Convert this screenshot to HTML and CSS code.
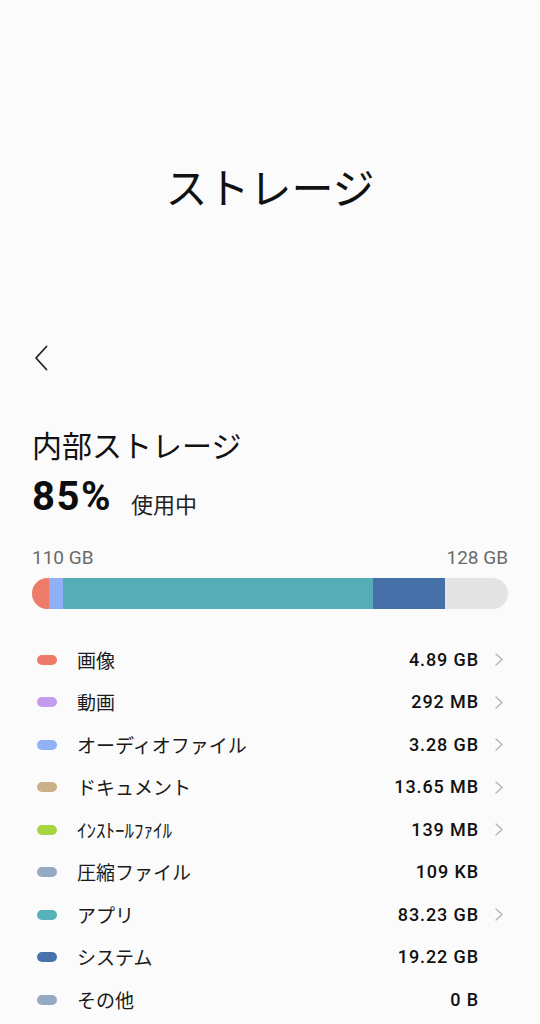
FILE: index.html
```html
<!DOCTYPE html>
<html lang="ja">
<head>
<meta charset="utf-8">
<title>ストレージ</title>
<link rel="stylesheet" href="styles.css">
</head>
<body>
<div class="page">
  <h1 class="title">ストレージ</h1>
  <div class="nav">
    <svg class="back" width="14" height="26" viewBox="0 0 14 26"><path d="M12.5 1.5 L2 13 L12.5 24.5" fill="none" stroke="#222" stroke-width="1.8" stroke-linecap="round" stroke-linejoin="round"/></svg>
  </div>
  <h2 class="heading">内部ストレージ</h2>
  <div class="usage"><span class="pct">85%</span><span class="inuse">使用中</span></div>
  <div class="scale"><span>110 GB</span><span>128 GB</span></div>
  <div class="bar">
    <div class="seg red" style="width:3.6%"></div>
    <div class="seg lblue" style="width:2.9%"></div>
    <div class="seg teal" style="width:65.1%"></div>
    <div class="seg dblue" style="width:15.1%"></div>
  </div>
  <ul class="list">
    <li class="row"><span class="dot c-img"></span><span class="label">画像</span><span class="value">4.89 GB</span><span class="chev"><svg width="8" height="13" viewBox="0 0 8 13"><path d="M1 1 L7 6.5 L1 12" fill="none" stroke="#b3b3b3" stroke-width="1.3" stroke-linecap="round" stroke-linejoin="round"/></svg></span></li>
    <li class="row"><span class="dot c-vid"></span><span class="label">動画</span><span class="value">292 MB</span><span class="chev"><svg width="8" height="13" viewBox="0 0 8 13"><path d="M1 1 L7 6.5 L1 12" fill="none" stroke="#b3b3b3" stroke-width="1.3" stroke-linecap="round" stroke-linejoin="round"/></svg></span></li>
    <li class="row"><span class="dot c-aud"></span><span class="label">オーディオファイル</span><span class="value">3.28 GB</span><span class="chev"><svg width="8" height="13" viewBox="0 0 8 13"><path d="M1 1 L7 6.5 L1 12" fill="none" stroke="#b3b3b3" stroke-width="1.3" stroke-linecap="round" stroke-linejoin="round"/></svg></span></li>
    <li class="row"><span class="dot c-doc"></span><span class="label">ドキュメント</span><span class="value">13.65 MB</span><span class="chev"><svg width="8" height="13" viewBox="0 0 8 13"><path d="M1 1 L7 6.5 L1 12" fill="none" stroke="#b3b3b3" stroke-width="1.3" stroke-linecap="round" stroke-linejoin="round"/></svg></span></li>
    <li class="row"><span class="dot c-ins"></span><span class="label">ｲﾝｽﾄｰﾙﾌｧｲﾙ</span><span class="value">139 MB</span><span class="chev"><svg width="8" height="13" viewBox="0 0 8 13"><path d="M1 1 L7 6.5 L1 12" fill="none" stroke="#b3b3b3" stroke-width="1.3" stroke-linecap="round" stroke-linejoin="round"/></svg></span></li>
    <li class="row"><span class="dot c-zip"></span><span class="label">圧縮ファイル</span><span class="value">109 KB</span><span class="chev"></span></li>
    <li class="row"><span class="dot c-app"></span><span class="label">アプリ</span><span class="value">83.23 GB</span><span class="chev"><svg width="8" height="13" viewBox="0 0 8 13"><path d="M1 1 L7 6.5 L1 12" fill="none" stroke="#b3b3b3" stroke-width="1.3" stroke-linecap="round" stroke-linejoin="round"/></svg></span></li>
    <li class="row"><span class="dot c-sys"></span><span class="label">システム</span><span class="value">19.22 GB</span><span class="chev"></span></li>
    <li class="row"><span class="dot c-oth"></span><span class="label">その他</span><span class="value">0 B</span><span class="chev"></span></li>
  </ul>
</div>
</body>
</html>
```

FILE: styles.css
```css
html, body {
  margin: 0;
  padding: 0;
  background: #fbfbfb;
}
body {
  font-family: "Noto Sans CJK JP", "Noto Sans", sans-serif;
  color: #111;
}
.page {
  padding: 0 32px;
  height: 1024px;
  overflow: hidden;
}
.title {
  margin: 161px 0 0;
  font-size: 42px;
  line-height: 50px;
  font-weight: 400;
  text-align: center;
  color: #111;
}
.nav {
  margin-top: 123px;
  height: 48px;
  display: flex;
  align-items: center;
  padding-left: 2px;
}
.back {
  display: block;
}
.heading {
  margin: 42px 0 0;
  font-size: 30px;
  line-height: 40px;
  font-weight: 400;
  color: #111;
}
.usage {
  margin-top: 11px;
  height: 44px;
  line-height: 44px;
  white-space: nowrap;
}
.pct {
  font-family: Roboto, "Liberation Sans", sans-serif;
  font-weight: 700;
  font-size: 40px;
  letter-spacing: 1.5px;
  color: #0d0d0d;
}
.inuse {
  margin-left: 19px;
  font-size: 22px;
  line-height: 22px;
  vertical-align: -3px;
  color: #222;
}
.scale {
  margin-top: 27px;
  display: flex;
  justify-content: space-between;
  font-family: Roboto, "Liberation Sans", sans-serif;
  font-size: 19px;
  line-height: 24px;
  color: #6b6b6b;
}
.bar {
  margin-top: 7.5px;
  height: 31px;
  border-radius: 16px;
  background: #e4e4e4;
  display: flex;
  overflow: hidden;
}
.seg { height: 100%; }
.red { background: #ef7b6b; }
.lblue { background: #8fb0f7; }
.teal { background: #56adb5; }
.dblue { background: #4671a8; }

.list {
  list-style: none;
  margin: 29.75px 0 0;
  padding: 0;
}
.row {
  height: 42.5px;
  display: flex;
  align-items: center;
}
.dot {
  width: 20px;
  height: 10px;
  border-radius: 5px;
  margin-left: 5px;
  flex: none;
}
.c-img { background: #ef7a6c; }
.c-vid { background: #c49bef; }
.c-aud { background: #8fb1f5; }
.c-doc { background: #cbb088; }
.c-ins { background: #a5d63f; }
.c-zip { background: #95a9c4; }
.c-app { background: #56b1b8; }
.c-sys { background: #4673ab; }
.c-oth { background: #95a9c4; }
.label {
  margin-left: 20px;
  flex: 1;
  font-size: 19px;
  line-height: 26px;
  color: #1a1a1a;
}
.value {
  font-family: Roboto, "Liberation Sans", sans-serif;
  font-weight: 500;
  font-size: 18px;
  letter-spacing: 0.9px;
  line-height: 24px;
  color: #111;
}
.chev {
  width: 8px;
  margin-left: 16px;
  margin-right: 5px;
  height: 13px;
  display: flex;
  align-items: center;
}
.chev svg { display: block; }
```
